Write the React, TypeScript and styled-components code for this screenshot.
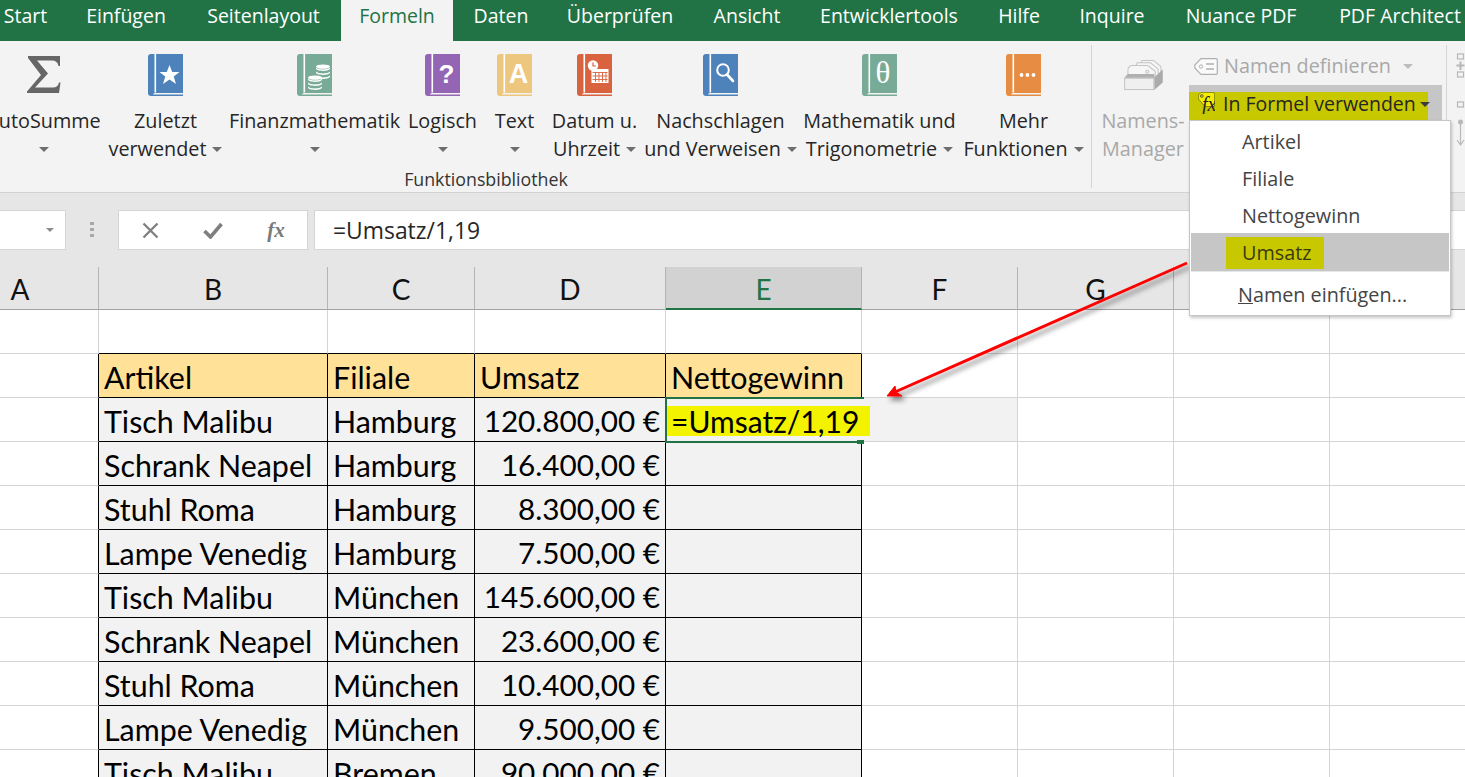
import React from "react";
import styled, { createGlobalStyle } from "styled-components";

const Global = createGlobalStyle`
  html, body { margin: 0; padding: 0; background: #fff; }
  #root { width: 1465px; height: 777px; }
`;

const UI = `"Open Sans", "Noto Sans", sans-serif`;
const SHEET = `Lato, "Liberation Sans", sans-serif`;

const Page = styled.div`
  position: relative;
  width: 1465px;
  height: 777px;
  overflow: hidden;
  display: flex;
  flex-direction: column;
  background: #fff;
`;

const TabBar = styled.div`
  flex: none;
  height: 41px;
  display: flex;
  background: #217346;
  margin-left: -15px;
`;
const Tab = styled.div<{ $active?: boolean; $w: number }>`
  flex: none;
  width: ${(p) => p.$w}px;
  height: 41px;
  text-align: center;
  font: 19.5px/32px ${UI};
  white-space: nowrap;
  color: ${(p) => (p.$active ? "#217346" : "#fff")};
  background: ${(p) => (p.$active ? "#f3f3f3" : "transparent")};
`;

const Ribbon = styled.div`
  flex: none;
  height: 152px;
  box-sizing: border-box;
  border-bottom: 1px solid #d2d2d2;
  background: #f3f3f3;
  display: flex;
  align-items: flex-start;
`;
const FunctionGroup = styled.div`
  flex: none;
  width: 1200px;
  margin-left: -114px;
  padding-left: 97px;
  box-sizing: border-box;
  display: flex;
  flex-direction: column;
`;
const ItemRow = styled.div`
  display: flex;
  height: 125px;
`;
const GroupLabel = styled.div`
  text-align: center;
  margin: 2px 0 0 -97px;
  font: 17.8px/22px ${UI};
  color: #333;
`;
const Item = styled.div<{ $w: number }>`
  flex: none;
  width: ${(p) => p.$w}px;
  display: flex;
  flex-direction: column;
  align-items: center;
  padding-top: 13px;
  box-sizing: border-box;
`;
const IconSlot = styled.div`
  height: 53px;
  width: 100%;
  display: flex;
  justify-content: center;
`;
const ItemLine = styled.div<{ $off?: boolean }>`
  height: 28px;
  font: 19.8px/28px ${UI};
  white-space: nowrap;
  display: flex;
  align-items: center;
  color: ${(p) => (p.$off ? "#a8a8a8" : "#262626")};
`;
const Caret = styled.span<{ $dark?: boolean; $light?: boolean; $gap?: number }>`
  display: inline-block;
  flex: none;
  width: 0;
  height: 0;
  margin-left: ${(p) => p.$gap ?? 6}px;
  border-left: 5px solid transparent;
  border-right: 5px solid transparent;
  border-top: 5px solid ${(p) => (p.$dark ? "#3c3c3c" : p.$light ? "#bdbdbd" : "#6e6e6e")};
`;
const Separator = styled.div<{ $ml: number }>`
  flex: none;
  width: 1px;
  height: 143px;
  margin: 4px 0 0 ${(p) => p.$ml}px;
  background: #d6d6d6;
`;
const ManagerItem = styled(Item)`
  margin-left: 4px;
  padding-top: 18px;
`;
const ManagerIconSlot = styled(IconSlot)`
  height: 48px;
`;
const NameColumn = styled.div`
  flex: none;
  width: 253px;
  margin-left: -1px;
  display: flex;
  flex-direction: column;
`;
const DefineRow = styled.div`
  height: 38px;
  margin-top: 6px;
  padding-left: 5px;
  display: flex;
  align-items: center;
  font: 19.8px/38px ${UI};
  white-space: nowrap;
  color: #a8a8a8;
`;
const DefineText = styled.span`
  margin-left: 6px;
`;
const UseRow = styled.div`
  height: 36px;
  background: #c6c6c6;
  display: flex;
  align-items: flex-end;
`;
const UseHighlight = styled.div`
  width: 239px;
  height: 29px;
  background: #c8c800;
  padding: 0 0 5px 9px;
  box-sizing: border-box;
  display: flex;
  align-items: center;
  font: 19.5px/24px ${UI};
  color: #262626;
  white-space: nowrap;
`;
const UseLabel = styled.span`
  margin-left: 8px;
`;
const UseCaret = styled(Caret)`
  margin-left: 4px;
`;
const FxTag = styled.svg`
  flex: none;
  display: block;
  margin-top: -3px;
`;
const SideIcons = styled.div`
  margin: 11px 0 0 9px;
  display: flex;
  flex-direction: column;
`;

const FormulaBand = styled.div`
  flex: none;
  height: 74px;
  box-sizing: border-box;
  padding-top: 17px;
  background: #e6e6e6;
  display: flex;
  align-items: flex-start;
`;
const NameBox = styled.div`
  flex: none;
  width: 66px;
  height: 40px;
  box-sizing: border-box;
  background: #fff;
  border: 1px solid #d4d4d4;
  border-left: none;
  display: flex;
  align-items: center;
  justify-content: flex-end;
  padding-right: 11px;
`;
const NameCaret = styled.span`
  width: 0;
  height: 0;
  border-left: 4px solid transparent;
  border-right: 4px solid transparent;
  border-top: 4px solid #8c8c8c;
`;
const Grip = styled.div`
  flex: none;
  width: 4px;
  height: 16px;
  margin: 12px 24px 0 24px;
  background: repeating-linear-gradient(to bottom, #a8a8a8 0 3px, transparent 3px 6px);
`;
const FormulaButtons = styled.div`
  flex: none;
  width: 190px;
  height: 40px;
  box-sizing: border-box;
  background: #fff;
  border: 1px solid #d4d4d4;
  display: grid;
  grid-template-columns: 62px 64px 62px;
  align-items: center;
  justify-items: center;
`;
const FxLabel = styled.span`
  font: italic bold 21px/38px "Liberation Serif", serif;
  color: #7a7a7a;
`;
const FormulaInput = styled.div`
  flex: 1;
  height: 40px;
  margin-left: 6px;
  margin-right: -4px;
  box-sizing: border-box;
  background: #fff;
  border: 1px solid #d4d4d4;
  padding-left: 18px;
  font: 22.9px/39px ${UI};
  color: #262626;
`;

const Sheet = styled.div`
  flex: none;
  display: grid;
  grid-template-columns: 99px 229px 147px 191px 196px 156px 156px 156px 136px;
  grid-template-rows: 43px;
  grid-auto-rows: 44px;
`;
const ColHead = styled.div<{ $sel?: boolean; $pad?: number }>`
  height: 43px;
  box-sizing: border-box;
  text-align: center;
  padding-right: ${(p) => p.$pad ?? 0}px;
  font: 28px/45px ${SHEET};
  color: ${(p) => (p.$sel ? "#217346" : "#111")};
  background: ${(p) => (p.$sel ? "#d2d2d2" : "#e6e6e6")};
  border-right: 1px solid #b4b4b4;
  border-bottom: ${(p) => (p.$sel ? "2px solid #217346" : "1px solid #a2a2a2")};
`;
const Cell = styled.div<{ $right?: boolean; $bottom?: boolean; $bg?: string; $num?: boolean }>`
  position: relative;
  box-sizing: border-box;
  min-width: 0;
  white-space: nowrap;
  padding: 0 5px;
  text-align: ${(p) => (p.$num ? "right" : "left")};
  font: ${(p) => (p.$num ? "29.7px" : "30.4px")}/46px ${SHEET};
  color: #000;
  background: ${(p) => p.$bg ?? "#fff"};
  border-right: 1px solid ${(p) => (p.$right ? "#000" : "#d4d4d4")};
  border-bottom: 1px solid ${(p) => (p.$bottom ? "#000" : "#d4d4d4")};
`;
const EditingCell = styled.div`
  position: relative;
  z-index: 1;
  background: #f2f2f2;
`;
const EditFrame = styled.div`
  position: absolute;
  left: -1px;
  top: -1px;
  width: 197px;
  height: 42px;
  border-top: 2px solid #217346;
  border-bottom: 2px solid #217346;
  border-left: 2px solid #217346;
`;
const EditHandle = styled.div`
  position: absolute;
  left: 191px;
  top: 42px;
  width: 7px;
  height: 4px;
  background: #217346;
`;
const EditText = styled.div`
  position: absolute;
  left: 1px;
  top: 8px;
  width: 203px;
  height: 30px;
  padding-left: 4px;
  box-sizing: border-box;
  background: #f3f300;
  font: 30px/31px ${SHEET};
  color: #000;
  white-space: nowrap;
`;

const Menu = styled.div`
  position: absolute;
  left: 1189px;
  top: 120px;
  width: 262px;
  height: 196px;
  box-sizing: border-box;
  padding: 1px 1px 0;
  background: #fff;
  border: 1px solid #c6c6c6;
  box-shadow: 1px 2px 3px rgba(0, 0, 0, 0.22);
  z-index: 5;
`;
const MenuItem = styled.div`
  height: 37px;
  padding-left: 51px;
  font: 19.8px/40px ${UI};
  color: #444;
`;
const MenuActive = styled(MenuItem)`
  height: 38px;
  background: #c6c6c6;
  display: flow-root;
`;
const MenuDivider = styled.div`
  height: 1px;
  margin: 0 0 3px;
  background: #e6e6e6;
`;
const MenuMark = styled.div`
  width: fit-content;
  margin: 4px 0 0 -16px;
  padding: 0 13px 0 16px;
  height: 32px;
  line-height: 32px;
  color: #3a3a10;
  background: #c8c800;
`;
const MenuLast = styled(MenuItem)`
  padding-left: 47px;
`;
const Access = styled.span`
  text-decoration: underline;
`;
const ArrowLayer = styled.svg`
  position: absolute;
  left: 0;
  top: 0;
  z-index: 3;
  pointer-events: none;
`;

type BookProps = { color: string; children?: React.ReactNode };
const Book = ({ color, children }: BookProps) => (
  <svg width="35" height="42" viewBox="0 0 35 42">
    <path d="M3 0H35V39H7Q5 39 5 40.5H35V42H3Q0 42 0 39V3Q0 0 3 0Z" fill={color} />
    <rect x="6.5" y="0" width="1.6" height="38.5" fill="#fff" />
    {children}
  </svg>
);

const Sigma = () => (
  <svg width="34" height="40" viewBox="0 0 34 40">
    <path d="M1 2H33V12H31.5Q30.5 6.5 25 6.5H10L21 19.5L8 33.5H26Q31 33.5 32 28.5H33.5L32 39H0V37.5L14 21L1 4Z" fill="#666" />
  </svg>
);

const StarGlyph = () => (
  <polygon
    points="21.5,11 24.2,18 31.5,18 25.7,22.5 28,30 21.5,25.4 15,30 17.3,22.5 11.5,18 18.8,18"
    fill="#fff"
  />
);
const CoinStack = ({ x, y }: { x: number; y: number }) => (
  <g>
    {[0, 4, 8].map((d) => (
      <path
        key={d}
        d={`M${x} ${y + d + 2}v1.5c0 1.4 3 2.4 7 2.4s7-1 7-2.4V${y + d + 2}c0 1.4-3 2.4-7 2.4s-7-1-7-2.4z`}
        fill="#fff"
      />
    ))}
    <ellipse cx={x + 7} cy={y + 1.6} rx="7" ry="2.2" fill="#fff" />
  </g>
);
const CalendarGlyph = () => (
  <g>
    <rect x="14.5" y="15" width="17" height="14" fill="#fff" />
    {[18, 21.5, 25].map((y) => (
      <rect key={y} x="15.5" y={y} width="15" height="0.9" fill="#d9623f" />
    ))}
    {[18, 21.5, 25, 28.5].map((x) => (
      <rect key={x} x={x} y="18" width="0.9" height="10" fill="#d9623f" />
    ))}
    <circle cx="16" cy="11.5" r="5.2" fill="#fff" />
    <path d="M16 8.5V12H19" stroke="#d9623f" strokeWidth="1.2" fill="none" />
  </g>
);
const BookLetter = styled.text<{ $size: number; $family?: string }>`
  font: bold ${(p) => p.$size}px ${(p) => p.$family ?? `"Liberation Sans", sans-serif`};
  fill: #fff;
  text-anchor: middle;
`;
const ThetaLetter = styled(BookLetter)`
  font-weight: normal;
`;

const ManagerIcon = () => (
  <svg width="42" height="32" viewBox="0 0 44 34">
    <g fill="#f6f6f6" stroke="#c4c4c4" strokeWidth="1.1">
      <path d="M17 10L21 1.5H33L41 8V16H17Z" />
      <path d="M12 12L16 4H30L38 10.5V18H12Z" />
      <path d="M6 19V12Q6 7 11 7H27L35 13V19Z" />
      <circle cx="26.5" cy="13.5" r="1.6" />
    </g>
    <path d="M2 20L6 16H34L34 20Z" fill="#b0b0b0" />
    <path d="M34 20L43 11V25L34 33Z" fill="#ababab" />
    <rect x="2.5" y="20.5" width="31" height="12" fill="#efefef" stroke="#c0c0c0" />
  </svg>
);
const TagIcon = () => (
  <svg width="24" height="17" viewBox="0 0 24 17">
    <path d="M7 .7H22Q23.3 .7 23.3 2V15Q23.3 16.3 22 16.3H7L.8 10V7Z" fill="#fafafa" stroke="#b0b0b0" strokeWidth="1.2" />
    <circle cx="7" cy="8.5" r="1.7" fill="none" stroke="#b0b0b0" />
    <path d="M12 6H20M12 11H20" stroke="#b0b0b0" strokeWidth="1.4" />
  </svg>
);
const FxIcon = () => (
  <FxTag width="17" height="22" viewBox="0 0 17 22">
    <path d="M3 .4H15Q16.6 .4 16.6 2V14.5H7L.4 7V3Z" fill="#f4ee00" stroke="#6a6a10" strokeWidth="0.7" />
    <circle cx="3.8" cy="4" r="1.4" fill="#c8c800" stroke="#444" strokeWidth="0.7" />
    <text x="4" y="18.5" fontFamily='"Liberation Serif", serif' fontStyle="italic" fontSize="20" fill="#262626">fx</text>
  </FxTag>
);
const SideIcon = () => (
  <svg width="12" height="100" viewBox="0 0 12 100">
    <g fill="none" stroke="#b8b8b8" strokeWidth="1.2">
      <rect x="1.5" y="2" width="6" height="5" />
      <rect x="1.5" y="20" width="6" height="5" />
      <rect x="1.5" y="50" width="6" height="5" />
      <path d="M4.5 9.5V18M0.5 13.5H8.5" strokeWidth="2" />
      <path d="M4.5 72V92M1 88L4.5 93L8 88" />
    </g>
    <circle cx="4.5" cy="70" r="2.5" fill="#b8b8b8" />
  </svg>
);
const CloseIcon = () => (
  <svg width="17" height="17" viewBox="0 0 17 17">
    <path d="M1.5 1.5L15.5 15.5M15.5 1.5L1.5 15.5" stroke="#7f7f7f" strokeWidth="2.3" />
  </svg>
);
const CheckIcon = () => (
  <svg width="20" height="17" viewBox="0 0 20 17">
    <path d="M1.5 9L7.5 15L18.5 2" stroke="#7f7f7f" strokeWidth="3.6" fill="none" />
  </svg>
);

const tabs: [string, number, boolean?][] = [
  ["Start", 81],
  ["Einfügen", 120],
  ["Seitenlayout", 155],
  ["Formeln", 112, true],
  ["Daten", 96],
  ["Überprüfen", 142],
  ["Ansicht", 112],
  ["Entwicklertools", 172],
  ["Hilfe", 88],
  ["Inquire", 98],
  ["Nuance PDF", 160],
  ["PDF Architect", 158],
];

const B = "#4d82bb";
const G = "#78ab97";
const buttons: { w: number; lines: string[]; caretOwn?: boolean; icon: React.ReactNode }[] = [
  { w: 121, lines: ["AutoSumme"], caretOwn: true, icon: <Sigma /> },
  { w: 123, lines: ["Zuletzt", "verwendet"], icon: <Book color={B}><StarGlyph /></Book> },
  {
    w: 175,
    lines: ["Finanzmathematik"],
    caretOwn: true,
    icon: (
      <Book color={G}>
        <CoinStack x={11} y={22} />
        <CoinStack x={19} y={11} />
      </Book>
    ),
  },
  {
    w: 81,
    lines: ["Logisch"],
    caretOwn: true,
    icon: <Book color="#9565b5"><BookLetter x="21.5" y="29" $size={26}>?</BookLetter></Book>,
  },
  {
    w: 63,
    lines: ["Text"],
    caretOwn: true,
    icon: <Book color="#edc77d"><BookLetter x="21.5" y="29" $size={27}>A</BookLetter></Book>,
  },
  { w: 97, lines: ["Datum u.", "Uhrzeit"], icon: <Book color="#d9623f"><CalendarGlyph /></Book> },
  {
    w: 155,
    lines: ["Nachschlagen", "und Verweisen"],
    icon: (
      <Book color={B}>
        <circle cx="20" cy="16" r="5.8" fill="none" stroke="#fff" strokeWidth="2" />
        <path d="M24 20.5L30 27" stroke="#fff" strokeWidth="2.6" strokeLinecap="round" />
      </Book>
    ),
  },
  {
    w: 163,
    lines: ["Mathematik und", "Trigonometrie"],
    icon: (
      <Book color={G}>
        <ThetaLetter x="21" y="29" $size={31} $family='"Liberation Serif", serif'>θ</ThetaLetter>
      </Book>
    ),
  },
  {
    w: 125,
    lines: ["Mehr", "Funktionen"],
    icon: (
      <Book color="#e68d43">
        <circle cx="15.5" cy="21" r="1.9" fill="#fff" />
        <circle cx="21.5" cy="21" r="1.9" fill="#fff" />
        <circle cx="27.5" cy="21" r="1.9" fill="#fff" />
      </Book>
    ),
  },
];

const columns = ["A", "B", "C", "D", "E", "F", "G", "H", "I"];
const rows: [string, string, string][] = [
  ["Tisch Malibu", "Hamburg", "120.800,00 €"],
  ["Schrank Neapel", "Hamburg", "16.400,00 €"],
  ["Stuhl Roma", "Hamburg", "8.300,00 €"],
  ["Lampe Venedig", "Hamburg", "7.500,00 €"],
  ["Tisch Malibu", "München", "145.600,00 €"],
  ["Schrank Neapel", "München", "23.600,00 €"],
  ["Stuhl Roma", "München", "10.400,00 €"],
  ["Lampe Venedig", "München", "9.500,00 €"],
  ["Tisch Malibu", "Bremen", "90.000,00 €"],
];

const Blank = ({ n }: { n: number }) => (
  <>
    {Array.from({ length: n }, (_, i) => (
      <Cell key={i} />
    ))}
  </>
);

export default function App() {
  return (
    <Page>
      <Global />
      <TabBar>
        {tabs.map(([t, w, a]) => (
          <Tab key={t} $w={w} $active={a}>{t}</Tab>
        ))}
      </TabBar>

      <Ribbon>
        <FunctionGroup>
          <ItemRow>
            {buttons.map((b) => (
              <Item key={b.lines[0]} $w={b.w}>
                <IconSlot>{b.icon}</IconSlot>
                <ItemLine>{b.lines[0]}</ItemLine>
                {b.caretOwn ? (
                  <ItemLine><Caret $gap={0} /></ItemLine>
                ) : (
                  <ItemLine>{b.lines[1]}<Caret /></ItemLine>
                )}
              </Item>
            ))}
          </ItemRow>
          <GroupLabel>Funktionsbibliothek</GroupLabel>
        </FunctionGroup>
        <Separator $ml={5} />
        <ManagerItem $w={94}>
          <ManagerIconSlot><ManagerIcon /></ManagerIconSlot>
          <ItemLine $off>Namens-</ItemLine>
          <ItemLine $off>Manager</ItemLine>
        </ManagerItem>
        <NameColumn>
          <DefineRow>
            <TagIcon />
            <DefineText>Namen definieren</DefineText>
            <Caret $light $gap={12} />
          </DefineRow>
          <UseRow>
            <UseHighlight>
              <FxIcon />
              <UseLabel>In Formel verwenden</UseLabel>
              <UseCaret $dark />
            </UseHighlight>
          </UseRow>
        </NameColumn>
        <Separator $ml={4} />
        <SideIcons><SideIcon /></SideIcons>
      </Ribbon>

      <FormulaBand>
        <NameBox><NameCaret /></NameBox>
        <Grip />
        <FormulaButtons>
          <CloseIcon />
          <CheckIcon />
          <FxLabel>fx</FxLabel>
        </FormulaButtons>
        <FormulaInput>=Umsatz/1,19</FormulaInput>
      </FormulaBand>

      <Sheet>
        {columns.map((c) => (
          <ColHead key={c} $sel={c === "E"} $pad={c === "A" ? 58 : 0}>{c}</ColHead>
        ))}
        <Cell />
        <Cell $bottom /><Cell $bottom /><Cell $bottom /><Cell $bottom />
        <Blank n={4} />

        <Cell $right />
        <Cell $right $bottom $bg="#ffe297">Artikel</Cell>
        <Cell $right $bottom $bg="#ffe297">Filiale</Cell>
        <Cell $right $bottom $bg="#ffe297">Umsatz</Cell>
        <Cell $right $bottom $bg="#ffe297">Nettogewinn</Cell>
        <Blank n={4} />

        {rows.map(([a, f, u], i) => (
          <React.Fragment key={i}>
            <Cell $right />
            <Cell $right $bottom $bg="#f2f2f2">{a}</Cell>
            <Cell $right $bottom $bg="#f2f2f2">{f}</Cell>
            <Cell $right $bottom $bg="#f2f2f2" $num>{u}</Cell>
            {i === 0 ? (
              <EditingCell>
                <EditFrame />
                <EditHandle />
                <EditText>=Umsatz/1,19</EditText>
              </EditingCell>
            ) : (
              <Cell $right $bottom $bg="#f2f2f2" />
            )}
            {i === 0 ? <Cell $bg="#f2f2f2" /> : <Cell />}
            <Blank n={3} />
          </React.Fragment>
        ))}
      </Sheet>

      <ArrowLayer width="1465" height="777" viewBox="0 0 1465 777">
        <defs>
          <filter id="arrowShadow" x="-10%" y="-20%" width="120%" height="140%">
            <feDropShadow dx="3" dy="4" stdDeviation="2.5" floodColor="#000" floodOpacity="0.45" />
          </filter>
        </defs>
        <g filter="url(#arrowShadow)">
          <path d="M1187 263L895 392" stroke="#f00" strokeWidth="3" fill="none" />
          <path d="M887 396L895 386L896 392L902 396Z" fill="#f00" stroke="#f00" strokeWidth="1" />
        </g>
      </ArrowLayer>

      <Menu>
        <MenuItem>Artikel</MenuItem>
        <MenuItem>Filiale</MenuItem>
        <MenuItem>Nettogewinn</MenuItem>
        <MenuActive><MenuMark>Umsatz</MenuMark></MenuActive>
        <MenuDivider />
        <MenuLast><Access>N</Access>amen einfügen...</MenuLast>
      </Menu>
    </Page>
  );
}
